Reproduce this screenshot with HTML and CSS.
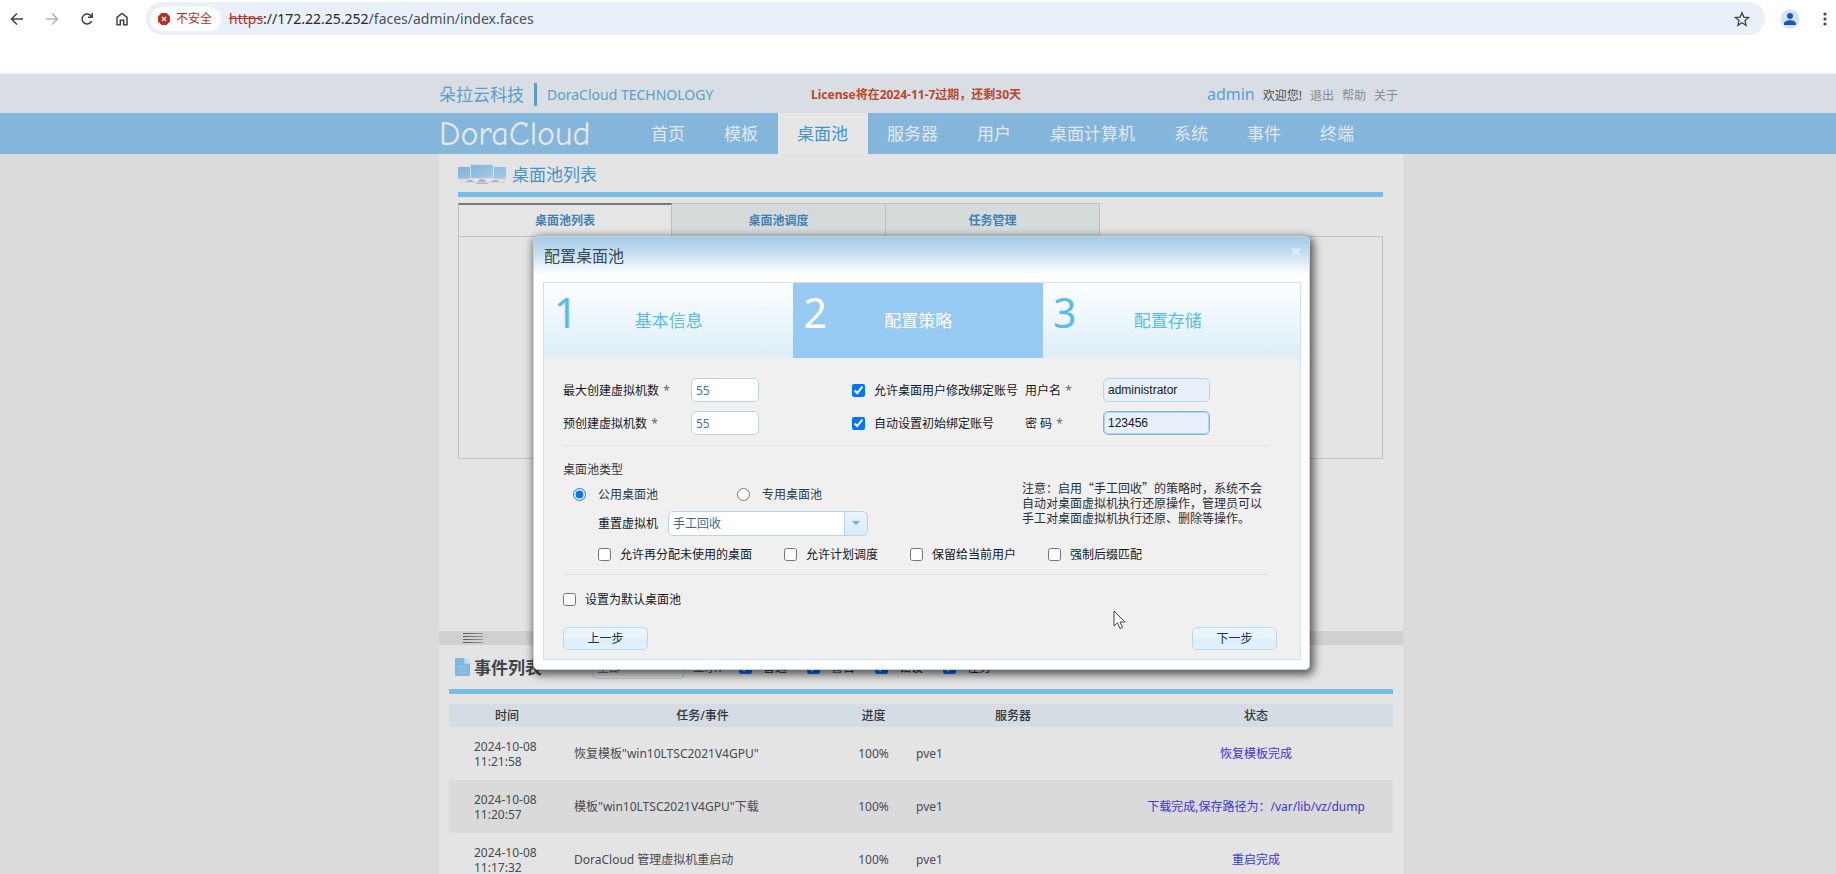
FILE: index.html
```html
<!DOCTYPE html>
<html lang="zh-CN">
<head>
<meta charset="utf-8">
<title>DoraCloud</title>
<link rel="stylesheet" href="styles.css">
</head>
<body>
<div class="browser">
  <div class="browser-nav">
    <button class="icon-btn" aria-label="后退"><svg width="16" height="16" viewBox="0 0 16 16"><path d="M14 8H3M8 2.5 2.5 8 8 13.5"/></svg></button>
    <button class="icon-btn faded" aria-label="前进"><svg width="16" height="16" viewBox="0 0 16 16"><path d="M2 8h11M8 2.5 13.5 8 8 13.5"/></svg></button>
    <button class="icon-btn" aria-label="刷新"><svg width="16" height="16" viewBox="0 0 16 16"><path d="M12.6 10.2A5 5 0 1 1 12.4 5.4M13.2 2v4.2H9"/></svg></button>
    <button class="icon-btn" aria-label="主页"><svg width="16" height="16" viewBox="0 0 16 16"><path d="M3 6.4 8 2.4l5 4v7.4H9.7V9.2H6.3v4.6H3z"/></svg></button>
  </div>
  <div class="address">
    <span class="chip"><svg width="12" height="12" viewBox="0 0 12 12"><path d="M3.5 0h5L12 3.5v5L8.500 12h-5L0 8.500v-5z" fill="#bd2c26"/><path d="m4 4 4 4M8 4 4 8" stroke="#fff" stroke-width="1.400"/></svg>不安全</span>
    <span class="url"><s>https</s>://172.22.25.252<span class="path">/faces/admin/index.faces</span></span>
    <button class="icon-btn star" aria-label="收藏"><svg width="16" height="16" viewBox="0 0 16 16"><path stroke-width="1.300" d="m8 1.700 1.800 4.400 4.800.4-3.600 3.100 1.100 4.700L8 11.800l-4.100 2.500L5 9.600 1.400 6.500l4.800-.4z"/></svg></button>
  </div>
  <button class="icon-btn" aria-label="用户"><svg class="solid" width="20" height="20" viewBox="0 0 20 20"><circle cx="10" cy="10" r="9.500" fill="#d3e2fa"/><circle cx="10" cy="7" r="3" fill="#1556c4"/><path d="M4 16v-1.500c0-2 3-3.300 6-3.300s6 1.300 6 3.300V16z" fill="#1556c4"/></svg></button>
  <button class="icon-btn" aria-label="菜单"><svg class="solid" width="16" height="16" viewBox="0 0 16 16" fill="#45484c"><circle cx="8" cy="3" r="1.600"/><circle cx="8" cy="8" r="1.600"/><circle cx="8" cy="13" r="1.600"/></svg></button>
</div>

<header>
  <div class="top">
    <div class="wrap top-row">
      <span class="company">朵拉云科技</span>
      <span class="company-en">DoraCloud TECHNOLOGY</span>
      <strong class="license">License将在2024-11-7过期，还剩30天</strong>
      <div class="account"><span class="who">admin</span><span>欢迎您!</span><a href="#">退出</a><a href="#">帮助</a><a href="#">关于</a></div>
    </div>
  </div>
  <div class="main-nav">
    <nav class="wrap nav-row">
      <span class="logo">DoraCloud</span>
      <a href="#">首页</a><a href="#">模板</a><a href="#" class="on">桌面池</a><a href="#">服务器</a><a href="#">用户</a><a href="#">桌面计算机</a><a href="#">系统</a><a href="#">事件</a><a href="#">终端</a>
    </nav>
  </div>
</header>

<main class="wrap page">
  <section class="pools">
    <h1><svg width="48" height="20" viewBox="0 0 48 20"><defs><linearGradient id="scr" x2="1" y2="1"><stop stop-color="#7db3dc"/><stop offset="1" stop-color="#a9cbe6"/></linearGradient></defs><path d="M8 18h8l-2-2h-4zM18 20h12l-4-5h-4zM33 18h8l-2-2h-4z" fill="#b4b4b4"/><path d="M1 18.500h46" stroke="#d0d0d0"/><path d="M0 3h12v12H0zM36 3h12v12H36z" fill="url(#scr)"/><path d="M0 15h12M36 15h12" stroke="#d2d2d2"/><path d="M12.500.500h23v14h-23z" fill="url(#scr)" stroke="#d6dfe6"/></svg>桌面池列表</h1>
    <div class="rule"></div>
    <div class="tabs"><button class="on">桌面池列表</button><button>桌面池调度</button><button>任务管理</button></div>
    <div class="panel"></div>
  </section>

  <div class="splitter"><svg width="20" height="12" viewBox="0 0 20 12"><defs><linearGradient id="grip"><stop stop-color="#555"/><stop offset="1" stop-color="#999"/></linearGradient></defs><path fill="url(#grip)" d="M0 1h20v1H0zM0 4h20v1H0zM0 7h20v1H0zM0 10h20v1H0z"/></svg></div>

  <section class="events">
    <div class="events-head">
      <svg width="15" height="18" viewBox="0 0 15 18"><path d="M0 0h10l5 5v13H0z" fill="#82b7dd"/><path d="M10 0v5h5" fill="#b9d6ea" stroke="#e4e4e4"/><path d="M3 9h9M3 12h9M3 15h9" stroke="#9cc6e4"/></svg>
      <h2>事件列表</h2>
      <select aria-label="事件类型"><option>全部</option></select>
      <span class="show">显示：</span>
      <label><input type="checkbox" checked>普通</label>
      <label><input type="checkbox" checked>警告</label>
      <label><input type="checkbox" checked>错误</label>
      <label><input type="checkbox" checked>任务</label>
    </div>
    <div class="rule"></div>
    <table>
      <colgroup><col class="c-time"><col class="c-task"><col class="c-prog"><col class="c-host"><col></colgroup>
      <thead><tr><th>时间</th><th>任务/事件</th><th>进度</th><th>服务器</th><th>状态</th></tr></thead>
      <tbody>
        <tr><td class="time">2024-10-08<br>11:21:58</td><td>恢复模板"win10LTSC2021V4GPU"</td><td class="mid">100%</td><td>pve1</td><td class="mid"><a href="#">恢复模板完成</a></td></tr>
        <tr><td class="time">2024-10-08<br>11:20:57</td><td>模板"win10LTSC2021V4GPU"下载</td><td class="mid">100%</td><td>pve1</td><td class="mid"><a href="#">下载完成,保存路径为：/var/lib/vz/dump</a></td></tr>
        <tr><td class="time">2024-10-08<br>11:17:32</td><td>DoraCloud 管理虚拟机重启动</td><td class="mid">100%</td><td>pve1</td><td class="mid"><a href="#">重启完成</a></td></tr>
      </tbody>
    </table>
  </section>

  <div class="dialog" role="dialog" aria-labelledby="dlg-title">
    <div class="dialog-head"><h3 id="dlg-title">配置桌面池</h3><button aria-label="关闭"><svg width="10" height="10" viewBox="0 0 10 10"><path d="m1.500 1.500 7 7M8.500 1.500l-7 7" stroke="#dcebf7" stroke-width="3"/></svg></button></div>
    <form class="dialog-body">
      <ol class="steps">
        <li><b>1</b><span>基本信息</span></li>
        <li class="on"><b>2</b><span>配置策略</span></li>
        <li><b>3</b><span>配置存储</span></li>
      </ol>
      <div class="fields">
        <div class="limits">
          <label for="max">最大创建虚拟机数 <i>*</i></label><input id="max" class="text num" value="55">
          <label class="check"><input type="checkbox" checked>允许桌面用户修改绑定账号</label>
          <label for="user">用户名 <i>*</i></label><input id="user" class="text filled" value="administrator">
          <label for="pre">预创建虚拟机数 <i>*</i></label><input id="pre" class="text num" value="55">
          <label class="check"><input type="checkbox" checked>自动设置初始绑定账号</label>
          <label for="pwd">密 码 <i>*</i></label><input id="pwd" class="text filled focus" value="123456">
        </div>
        <hr>
        <div class="kind">
          <div class="kind-main">
            <div class="kind-title">桌面池类型</div>
            <div class="radios">
              <label><input type="radio" name="kind" checked>公用桌面池</label>
              <label><input type="radio" name="kind">专用桌面池</label>
            </div>
            <div class="reset"><label for="reset">重置虚拟机</label>
              <span class="combo"><select id="reset"><option>手工回收</option></select></span></div>
          </div>
          <p class="note">注意：启用“手工回收”的策略时，系统不会<br>自动对桌面虚拟机执行还原操作，管理员可以<br>手工对桌面虚拟机执行还原、删除等操作。</p>
        </div>
        <div class="options">
          <label><input type="checkbox">允许再分配未使用的桌面</label>
          <label><input type="checkbox">允许计划调度</label>
          <label><input type="checkbox">保留给当前用户</label>
          <label><input type="checkbox">强制后缀匹配</label>
        </div>
        <hr>
        <label class="check default"><input type="checkbox">设置为默认桌面池</label>
        <div class="actions"><button type="button">上一步</button><button type="button">下一步</button></div>
      </div>
    </form>
    <svg class="cursor" width="14" height="20" viewBox="0 0 14 20"><path d="M1 1v15l3.500-3.300L7 18.500l2.500-1L7 12h5z" fill="#fff" stroke="#444"/></svg>
  </div>
</main>
</body>
</html>
```
FILE: styles.css
```css
* { box-sizing: border-box; }
body {
  margin: 0;
  height: 100vh;
  overflow: hidden;
  background: #dbdbdb;
  color: #454b52;
  font: 12px/15px "Noto Sans", "Noto Sans CJK SC", sans-serif;
}
button, input, select { font: inherit; }
a { text-decoration: none; }
h1, h2, h3, p, ol { margin: 0; padding: 0; font-weight: normal; }
input[type="checkbox"], input[type="radio"] { width: 13px; height: 13px; margin: 0; flex: none; }
label { color: #15181c; white-space: nowrap; }

/* browser bar */
.browser {
  height: 74px;
  padding: 2px 0 0 6px;
  display: flex;
  align-items: flex-start;
  background: #fff;
  border-bottom: 1px solid #eef0f0;
}
.browser-nav { display: flex; gap: 13px; margin-right: 13px; }
.icon-btn { border: 0; padding: 0; background: none; height: 33px; min-width: 22px; display: flex; align-items: center; justify-content: center; }
.icon-btn svg { fill: none; stroke: #3f4246; stroke-width: 1.500px; }
.icon-btn .solid { stroke: none; }
.icon-btn svg.solid:not([width="20"]) { fill: #45484c; }
.icon-btn.faded svg { stroke: #b0b3b6; }
.browser-nav + .address { margin-right: 14px; }
.browser > .icon-btn + .icon-btn { margin-left: 13px; }
.address {
  flex: 1;
  height: 33px;
  display: flex;
  align-items: center;
  padding: 0 12px 0 4px;
  border-radius: 17px;
  background: #e9f0f9;
}
.chip {
  display: flex;
  align-items: center;
  gap: 6px;
  height: 24px;
  padding: 0 9px 0 8px;
  border-radius: 12px;
  background: #fff;
  color: #b3302b;
}
.url { flex: 1; margin-left: 8px; font-size: 14px; line-height: 20px; color: #25282c; }
.url s { color: #b3302b; }
.path { color: #4c5157; }

/* header */
.wrap { width: 964px; margin: 0 auto; position: relative; left: 3px; }
.top { background: #d9dee4; }
.top-row { height: 39px; padding-top: 2px; display: flex; align-items: center; }
.company { padding-right: 10px; border-right: 3px solid #5a9dc6; font-size: 17px; line-height: 23px; color: #5b9fc6; }
.company-en { width: 274px; padding-left: 10px; font-size: 14px; color: #5b9fc6; }
.license { color: #b8482c; }
.account { margin-left: auto; padding-right: 5px; display: flex; align-items: baseline; gap: 8px; }
.account a { color: #868b91; }
.who { font-size: 16px; color: #559fdb; }
.main-nav { background: #84b5db; }
.nav-row { height: 41px; display: flex; }
.logo { width: 193px; font: 500 34px/43px "Comic Sans MS", "Comic Neue", Lato, sans-serif; color: #e6e8ea; }
.nav-row a { padding: 0 20px 0 19px; font-size: 17px; line-height: 41px; color: #e3e9ee; white-space: nowrap; }
.nav-row a.on { background: #e6e6e6; color: #4496c8; }

/* desktop pools */
.page { background: #e4e4e4; }
.pools { height: 477px; padding: 6px 20px 0 19px; }
.pools h1 { height: 32px; padding-bottom: 4px; display: flex; align-items: center; gap: 6px; font-size: 17px; color: #4496c8; }
.rule { height: 5px; background: #76bce3; }
.tabs { display: flex; margin-top: 6px; }
.tabs button {
  width: 214px;
  height: 33px;
  border: 1px solid #bcc0c0;
  border-width: 1px 1px 0;
  background: #d5dada;
  font-weight: bold;
  color: #3f80b4;
}
.tabs button + button { border-left: 0; }
.tabs .on { border-top: 2px solid #777; background: #e5e5e5; }
.panel { height: 223px; border: 1px solid #bfc1c2; }
.splitter { height: 14px; padding: 1px 24px; background: #d0d0d0; }
.splitter svg { display: block; }

/* events */
.events { padding: 0 10px; }
.events-head { height: 44px; padding-left: 6px; display: flex; align-items: center; }
.events-head h2 { margin: 0 16px 0 4px; width: 102px; font-size: 17px; font-weight: bold; color: #3f454b; }
.events-head select { width: 92px; height: 23px; border: 1px solid #b7cde0; border-radius: 4px; background: #e4e4e4; color: #3d6a94; }
.show { width: 46px; margin-left: 9px; }
.events-head label { width: 68px; display: flex; align-items: center; gap: 11px; }
.events table { width: 100%; margin-top: 10px; border-collapse: collapse; table-layout: fixed; }
.c-time { width: 116px; }
.c-task { width: 275px; }
.c-prog { width: 67px; }
.c-host { width: 212px; }
.events th { height: 23px; padding: 0; background: #d5dce4; font-weight: 500; color: #30363c; }
.events td { height: 53px; padding: 0 9px; }
.events td.time { padding-left: 25px; }
.events td.mid { padding: 0; text-align: center; }
.events td a { color: #3c36d6; }
.events tbody tr:nth-child(even) { background: #dadada; }

/* dialog */
.dialog {
  position: absolute;
  top: 82px;
  left: 94px;
  width: 777px;
  padding: 0 8px 9px 9px;
  border-radius: 5px;
  border: 1px solid #b9d6ea;
  background: linear-gradient(#a6cae6, #c0dbee 14px, #fff 38px);
  box-shadow: 2px 3px 9px 2px rgba(0, 0, 0, .6);
}
.dialog-head { height: 45px; display: flex; justify-content: space-between; }
.dialog-head h3 { padding-left: 1px; font-size: 16px; line-height: 38px; color: #3c4a56; }
.dialog-head button { height: 28px; border: 0; padding: 2px 0 0; background: none; }
.dialog-body { border: 1px solid #cfe1ee; background: #f0f0f0; }
.steps { display: flex; list-style: none; background: linear-gradient(#fdfeff, #dceef8); }
.steps li { flex: 0 0 33%; height: 75px; padding: 0 10px; display: grid; grid-template-columns: 1fr auto 1fr; align-items: center; color: #56bdee; }
.steps li.on { background: #96caf2; color: #fff; }
.steps b { align-self: start; font-size: 41px; line-height: 58px; font-weight: normal; }
.steps span { font-size: 17px; }
.fields { padding: 20px 23px 9px 19px; }
.fields i { padding-left: 1px; font-style: normal; color: #666; }
.limits { display: grid; grid-template-columns: 128px 161px 173px 78px 107px; row-gap: 9px; align-items: center; }
.text { width: 100%; height: 24px; padding: 0 4px; border: 1px solid #b9d3ea; border-radius: 5px; background: #fff; color: #46729c; }
.num { width: 68px; }
.filled { background: #e8f0fc; color: #15181c; font-family: "Liberation Sans", sans-serif; }
.focus { border-color: #7fb2e0; outline: 1px solid #b4d3ee; outline-offset: -2px; }
.check { display: flex; align-items: center; gap: 9px; }
hr { margin: 10px 8px 0 0; border: 0; border-top: 1px solid #dfe1e2; }
.kind { display: flex; padding-top: 16px; }
.kind-main { width: 459px; }
.kind-title { height: 14px; color: #2f3740; }
.radios { display: flex; height: 28px; padding: 8px 0 0 10px; }
.radios label { width: 164px; display: flex; align-items: center; gap: 12px; color: #2f3740; }
.reset { display: flex; align-items: center; margin-top: 7px; }
.reset label { width: 105px; padding-left: 35px; }
.combo { position: relative; width: 200px; height: 25px; }
.combo select {
  appearance: none;
  width: 100%;
  height: 100%;
  padding: 0 4px;
  border: 1px solid #b9d3ea;
  border-radius: 5px;
  background: linear-gradient(90deg, #b9d3ea 1px, transparent 1px) right / 23px no-repeat, linear-gradient(#e9f4fd, #d8ebfa) right / 23px no-repeat, #fff;
  color: #3d6a94;
}
.combo::after {
  content: "";
  position: absolute;
  right: 8px;
  top: 10px;
  border: 4px solid transparent;
  border-top-color: #6faed8;
  pointer-events: none;
}
.note { margin-top: 18px; font-family: "Noto Sans CJK SC", sans-serif; color: #2a2f35; white-space: nowrap; }
.options { display: flex; gap: 32px; height: 20px; margin-top: 8px; padding-left: 35px; }
.options label { display: flex; align-items: center; gap: 9px; }
.default { height: 20px; margin-top: 14px; }
.actions { display: flex; justify-content: space-between; margin-top: 18px; }
.actions button { width: 85px; height: 23px; padding: 0; border: 1px solid #b9d8ee; border-radius: 5px; background: linear-gradient(#eaf4fd 50%, #dcedfb 55%, #e4f2fd); color: #20303e; }
.cursor { position: absolute; left: 579px; top: 373px; }
```
